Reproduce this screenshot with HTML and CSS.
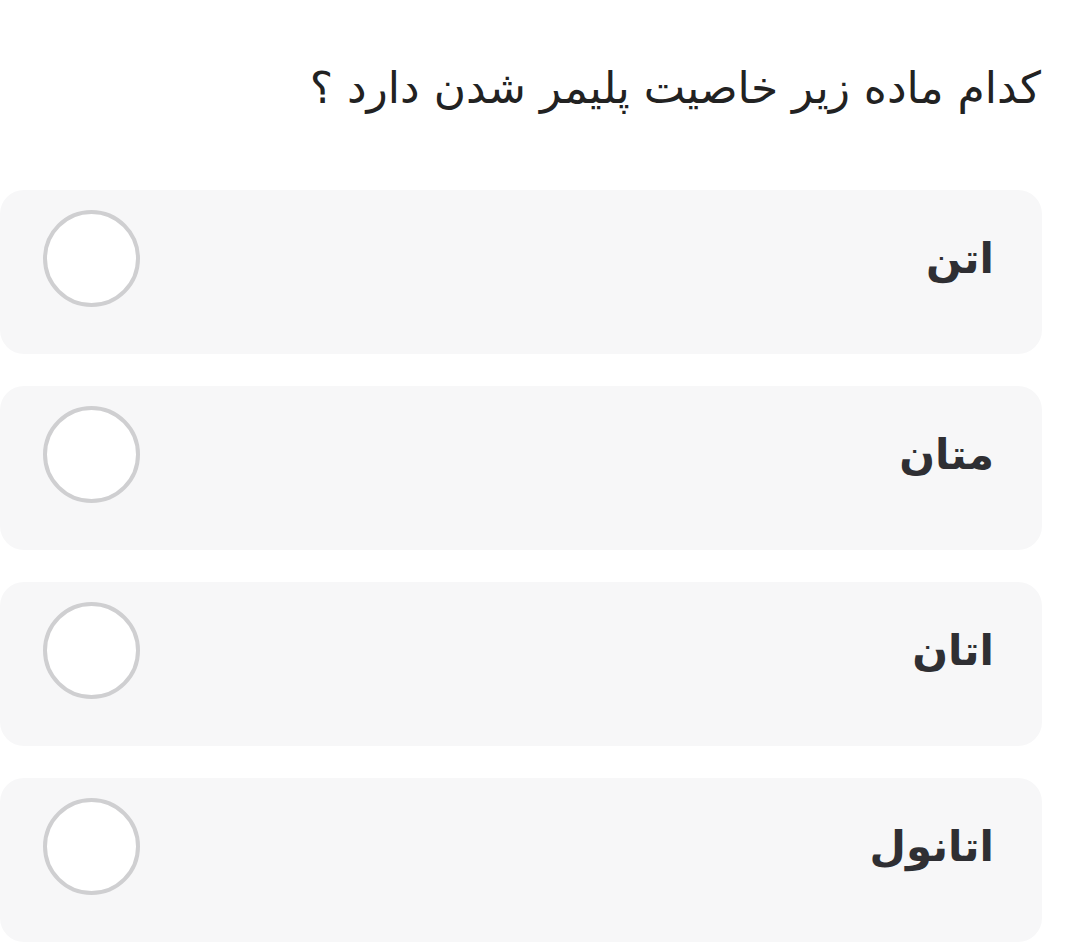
FILE: index.html
```html
<!doctype html>
<html lang="fa" dir="rtl">
<head>
  <meta charset="utf-8">
  <link rel="stylesheet" href="styles.css">
</head>
<body>
  <div class="quiz">
    <p class="question">کدام ماده زیر خاصیت پلیمر شدن دارد ؟</p>
    <div class="options">
      <label class="option">
        <span class="option-text">اتن</span>
        <span class="radio"></span>
      </label>
      <label class="option">
        <span class="option-text">متان</span>
        <span class="radio"></span>
      </label>
      <label class="option">
        <span class="option-text">اتان</span>
        <span class="radio"></span>
      </label>
      <label class="option">
        <span class="option-text">اتانول</span>
        <span class="radio"></span>
      </label>
    </div>
  </div>
</body>
</html>
```

FILE: styles.css
```css
body {
  margin: 0;
  background: #fff;
  font-family: "DejaVu Sans", sans-serif;
  color: #2b2b2b;
}
.quiz {
  width: 1042px;
  margin-right: 38px;
  padding-top: 53px;
}
.question {
  margin: 0 1px 0 0;
  font-size: 44px;
  line-height: 70px;
  font-weight: normal;
  color: #222;
}
.options {
  display: flex;
  flex-direction: column;
  gap: 32px;
  margin-top: 67px;
}
.option {
  display: flex;
  align-items: center;
  justify-content: space-between;
  height: 97px;
  padding: 20px 48px 47px 43px;
  background: #f7f7f8;
  border-radius: 24px;
}
.option-text {
  font-size: 42px;
  font-weight: bold;
  color: #2f2f33;
}
.radio {
  width: 89px;
  height: 89px;
  border: 4px solid #cfcfd1;
  border-radius: 50%;
  background: #fff;
}
```
